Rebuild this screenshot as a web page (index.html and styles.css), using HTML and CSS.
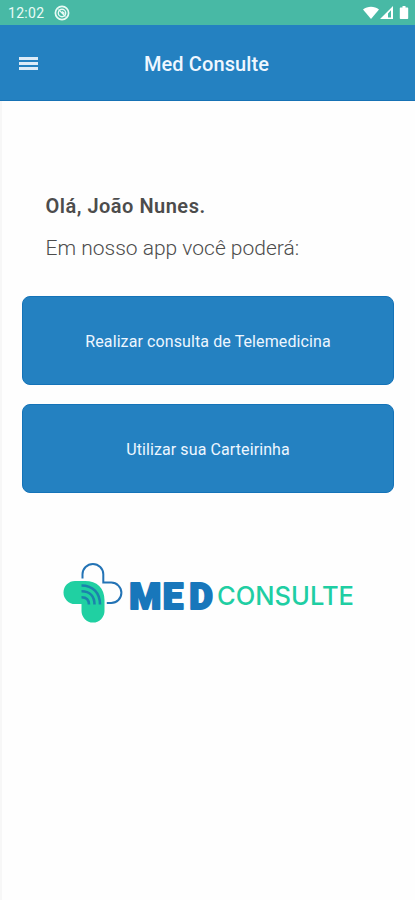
FILE: index.html
```
<!DOCTYPE html>
<html lang="pt-BR">
<head>
    <meta charset="UTF-8">
    <meta name="viewport" content="width=device-width, initial-scale=1.0">
    <title>Med Consulte</title>
    <link rel="stylesheet" href="styles.css">
</head>
<body>
    <div class="status-bar">
        <span class="time">12:02</span>
        <svg class="status-app" width="16" height="16" viewBox="0 0 16 16" fill="none" stroke="#e9fbf5">
            <circle cx="8" cy="8" r="6.6" stroke-width="1.7"/>
            <circle cx="8" cy="8" r="3.7" stroke-width="1.4"/>
            <path d="M4.5 4.5l7 7M8 6.5l2.5 2" stroke-width="1.2"/>
        </svg>
        <svg class="status-icons" width="48" height="16" viewBox="0 0 48 16" fill="#fff">
            <path d="M0 4.4C4.5 1 11.5 1 16 4.4L8 14z"/>
            <path fill-rule="evenodd" d="M17 14L30 1v13zM25 8.5v4h3V5.2z"/>
            <path d="M37.5 2.5h2V1h3v1.5h2q.7 0 .7.7v10q0 .8-.7.8h-7q-.7 0-.7-.8v-10q0-.7.7-.7z"/>
        </svg>
    </div>

    <header class="header">
        <button class="menu-btn" aria-label="Menu">
            <span></span>
            <span></span>
            <span></span>
        </button>
        <h1>Med Consulte</h1>
    </header>

    <main class="content">
        <div class="greeting">
            <h2>Olá, João Nunes.</h2>
            <p>Em nosso app você poderá:</p>
        </div>

        <div class="actions">
            <button class="action-btn">Realizar consulta de Telemedicina</button>
            <button class="action-btn">Utilizar sua Carteirinha</button>
        </div>

        <svg class="logo" width="292" height="62" viewBox="62 562 292 62">
            <path class="logo-outline" d="M82.5 578.5V574.3a10.4 10.4 0 0 1 20.8 0V582.6H111.2a10.2 10.2 0 0 1 0 20.4H106.8"/>
            <path class="logo-leaf" d="M75 581H85C97 581 104.5 588 104.5 600V611a11.5 11.5 0 0 1-23 0V604H75a11.5 11.5 0 0 1 0-23z"/>
            <path class="logo-waves" d="M81.5 585.5C93 585.5 100 593 100 604.5M81.5 591.2C90 591.2 94.5 596.5 94.5 604.5M81.5 597.2C86.5 597.2 89 600 89 604.5"/>
            <text class="logo-med" x="129.2 162.7 189.2" y="608.5">MED</text>
            <text class="logo-consulte" x="217" y="604.5" textLength="137" lengthAdjust="spacingAndGlyphs">CONSULTE</text>
        </svg>
    </main>
</body>
</html>
```
FILE: styles.css
```
* {
    margin: 0;
    padding: 0;
    box-sizing: border-box;
    font-family: Roboto, sans-serif;
}

body {
    background-color: #fefefe;
    min-height: 100vh;
}

.status-bar {
    display: flex;
    align-items: center;
    height: 25px;
    padding: 0 4px 0 8px;
    background-color: #48b9a5;
    color: #e9fbf5;
}

.time {
    font-size: 14px;
    letter-spacing: 0.3px;
    padding-top: 1px;
}

.status-app {
    margin-left: 10px;
}

.status-icons {
    margin-left: auto;
}

.header {
    display: grid;
    grid-template-columns: 56px 1fr 58px;
    align-items: center;
    height: 76px;
    padding-top: 2px;
    background-color: #2481c1;
    border-bottom: 1px solid #1672b5;
}

.menu-btn {
    display: flex;
    flex-direction: column;
    gap: 2px;
    width: 19px;
    margin-left: 19px;
    background: none;
    border: none;
}

.menu-btn span {
    height: 3px;
    background-color: #dcebf8;
}

h1 {
    color: #eff7ff;
    font-size: 20px;
    font-weight: 500;
    letter-spacing: 0.1px;
    text-align: center;
}

.content {
    min-height: 799px;
    border-left: 2px solid #f7f7f7;
    padding: 91px 21px 0 20px;
}

.greeting {
    padding-left: 23.5px;
    color: #4c4c4c;
}

h2 {
    font-size: 20px;
    font-weight: 600;
    line-height: 28px;
    letter-spacing: 0.5px;
}

.greeting p {
    margin-top: 14px;
    color: #4c4c4c;
    font-size: 21px;
    font-weight: 300;
    line-height: 28px;
}

.actions {
    display: flex;
    flex-direction: column;
    gap: 19px;
    margin-top: 34px;
}

.action-btn {
    height: 89px;
    padding-top: 2px;
    border: 1px solid #1473b8;
    border-radius: 8px;
    background-color: #2481c1;
    color: #edf6ff;
    font-size: 16px;
    letter-spacing: 0.1px;
}

.logo {
    display: block;
    margin: 69px 0 0 40px;
}

.logo-outline {
    fill: none;
    stroke: #2373b5;
    stroke-width: 2;
}

.logo-leaf {
    fill: #20d0a2;
}

.logo-waves {
    fill: none;
    stroke: #1b83ac;
    stroke-width: 2.6;
}

.logo-med {
    fill: #1877bb;
    stroke: #1877bb;
    stroke-width: 2;
    stroke-linejoin: round;
    font-size: 36.5px;
    font-weight: 900;
}

.logo-consulte {
    fill: #1fcea3;
    font-family: Inter, sans-serif;
    font-size: 25.5px;
    font-weight: 500;
}
```
